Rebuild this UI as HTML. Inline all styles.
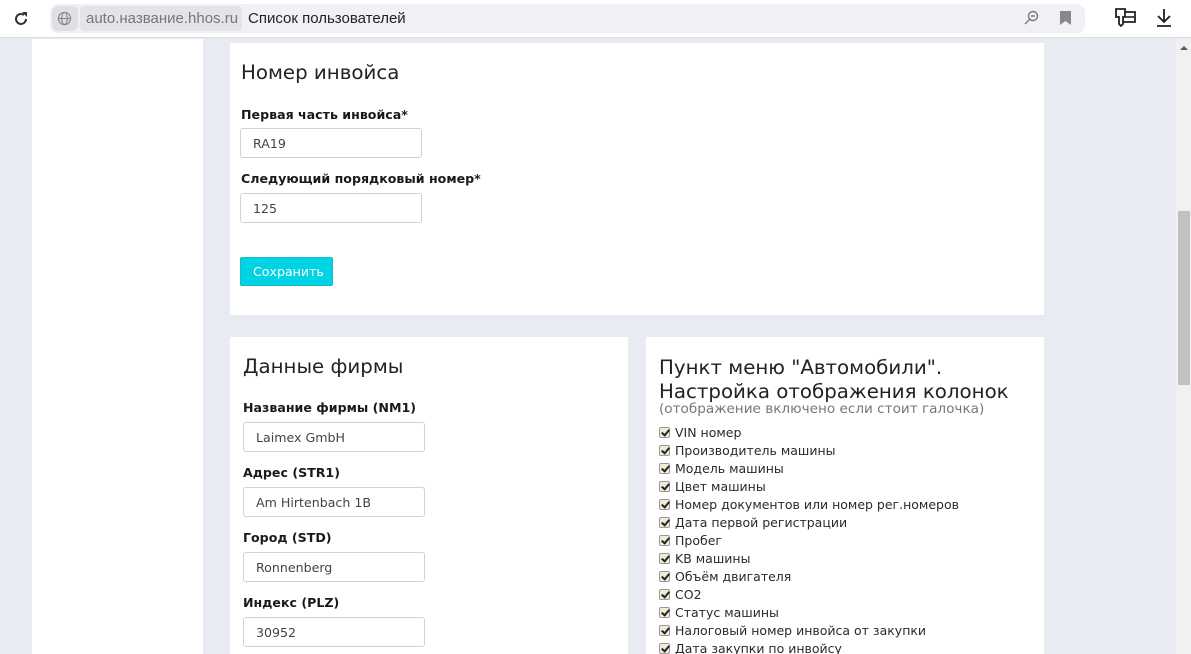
<!DOCTYPE html>
<html style="overflow:hidden;height:654px"><head><meta charset="utf-8"><style>
*{margin:0;padding:0;box-sizing:border-box}
body{width:1191px;height:654px;overflow:hidden;background:#e8ebf2;font-family:"DejaVu Sans","Liberation Sans",sans-serif;color:#222;position:relative}
.a{position:absolute}
.bar{left:0;top:0;width:1191px;height:38px;background:#fff;border-bottom:1px solid #dcdde0}
.addr{left:50px;top:4px;width:1035px;height:29px;background:#f0f1f4;border-radius:8px}
.card{background:#fff}
h2{font-weight:normal;font-size:19.8px;color:#222}
.lbl{font-weight:bold;font-size:12.6px;color:#1a1a1a}
.inp{width:182px;height:30px;border:1px solid #cfd1d6;border-radius:3px;font-size:12.6px;color:#444;padding:7px 0 0 12px}
.cb{font-size:12.5px;color:#2a2a2a;line-height:18px}
.cb div{height:18px;white-space:nowrap}
.cb span{display:inline-block;width:11px;height:11px;border:1px solid #999;border-radius:2px;background:#f3ecd8;margin-right:5px;vertical-align:-1px;position:relative}
.cb span:after{content:"";position:absolute;left:3px;top:0px;width:3px;height:6px;border:solid #222;border-width:0 2px 2px 0;transform:rotate(40deg)}
</style></head><body>
<div class="a bar"></div>
<svg class="a" style="left:12px;top:10px" width="18" height="18" viewBox="0 0 18 18"><path d="M14 9a5 5 0 1 1-2-4" fill="none" stroke="#333" stroke-width="2"/><path d="M10 2h5v5z" fill="#333"/></svg>
<div class="a addr"></div>
<div class="a" style="left:52px;top:6px;width:26px;height:25px;background:#dfe0e4;border-radius:6px"></div>
<svg class="a" style="left:57px;top:11px" width="15" height="15" viewBox="0 0 16 16"><g fill="none" stroke="#888" stroke-width="1.2"><circle cx="8" cy="8" r="6.5"/><ellipse cx="8" cy="8" rx="3" ry="6.5"/><path d="M1.5 8h13"/></g></svg>
<div class="a" style="left:80px;top:6px;width:162px;height:25px;background:#e3e4e8;border-radius:4px"></div>
<div class="a" style="left:86px;top:10px;font-family:'Liberation Sans',sans-serif;font-size:15px;color:#777">auto.название.hhos.ru</div>
<div class="a" style="left:248px;top:10px;font-family:'Liberation Sans',sans-serif;font-size:15px;color:#222">Список пользователей</div>
<svg class="a" style="left:1023px;top:10px" width="16" height="16" viewBox="0 0 16 16"><circle cx="10" cy="6" r="4.5" fill="none" stroke="#777" stroke-width="1.4"/><path d="M8 6h4M7 9l-5 5" stroke="#777" stroke-width="1.4"/></svg>
<svg class="a" style="left:1060px;top:11px" width="11" height="14" viewBox="0 0 11 14"><path d="M0 0h11v14l-5.5-4-5.5 4z" fill="#888"/></svg>
<svg class="a" style="left:1114px;top:7px" width="24" height="22" viewBox="0 0 24 22"><path d="M2 2h9v8h-2v7l-2 2-2-2v-7H2z M11 5h10v10H9" fill="none" stroke="#222" stroke-width="1.8"/><path d="M12 10h8" stroke="#222" stroke-width="1.6"/></svg>
<svg class="a" style="left:1156px;top:8px" width="16" height="20" viewBox="0 0 16 20"><path d="M8 1v13M2 8l6 6 6-6M1 18h14" fill="none" stroke="#222" stroke-width="1.8"/></svg>

<div class="a" style="left:32px;top:39px;width:171px;height:615px;background:#fff"></div>
<div class="a" style="left:1176px;top:39px;width:15px;height:615px;background:#f1f1f1"></div>
<div class="a" style="left:1178px;top:211px;width:12px;height:174px;background:#c1c1c1"></div>
<div class="a" style="left:1180px;top:46px;width:0;height:0;border:4px solid transparent;border-bottom:4px solid #555;border-top:0"></div>

<div class="a card" style="left:230px;top:43px;width:814px;height:272px"></div>
<h2 class="a" style="left:241px;top:61px">Номер инвойса</h2>
<div class="a lbl" style="left:241px;top:107px">Первая часть инвойса*</div>
<div class="a inp" style="left:240px;top:128px">RA19</div>
<div class="a lbl" style="left:241px;top:171px">Следующий порядковый номер*</div>
<div class="a inp" style="left:240px;top:193px">125</div>
<div class="a" style="left:240px;top:257px;width:93px;height:29px;background:#00d3e3;border:1px solid #14bccb;border-radius:2px;color:#fff;font-size:12.6px;padding:6px 0 0 12px">Сохранить</div>

<div class="a card" style="left:230px;top:337px;width:398px;height:317px"></div>
<h2 class="a" style="left:243px;top:355px">Данные фирмы</h2>
<div class="a lbl" style="left:243px;top:400px">Название фирмы (NM1)</div>
<div class="a inp" style="left:243px;top:422px">Laimex GmbH</div>
<div class="a lbl" style="left:243px;top:465px">Адрес (STR1)</div>
<div class="a inp" style="left:243px;top:487px">Am Hirtenbach 1B</div>
<div class="a lbl" style="left:243px;top:530px">Город (STD)</div>
<div class="a inp" style="left:243px;top:552px">Ronnenberg</div>
<div class="a lbl" style="left:243px;top:595px">Индекс (PLZ)</div>
<div class="a inp" style="left:243px;top:617px">30952</div>

<div class="a card" style="left:646px;top:337px;width:398px;height:317px"></div>
<h2 class="a" style="left:659px;top:356px;line-height:24px">Пункт меню "Автомобили".<br>Настройка отображения колонок</h2>
<div class="a" style="left:659px;top:401px;font-size:13.6px;color:#777">(отображение включено если стоит галочка)</div>
<div class="a cb" style="left:659px;top:424px">
<div><span></span>VIN номер</div>
<div><span></span>Производитель машины</div>
<div><span></span>Модель машины</div>
<div><span></span>Цвет машины</div>
<div><span></span>Номер документов или номер рег.номеров</div>
<div><span></span>Дата первой регистрации</div>
<div><span></span>Пробег</div>
<div><span></span>KB машины</div>
<div><span></span>Объём двигателя</div>
<div><span></span>CO2</div>
<div><span></span>Статус машины</div>
<div><span></span>Налоговый номер инвойса от закупки</div>
<div><span></span>Дата закупки по инвойсу</div>
</div>
</body></html>
